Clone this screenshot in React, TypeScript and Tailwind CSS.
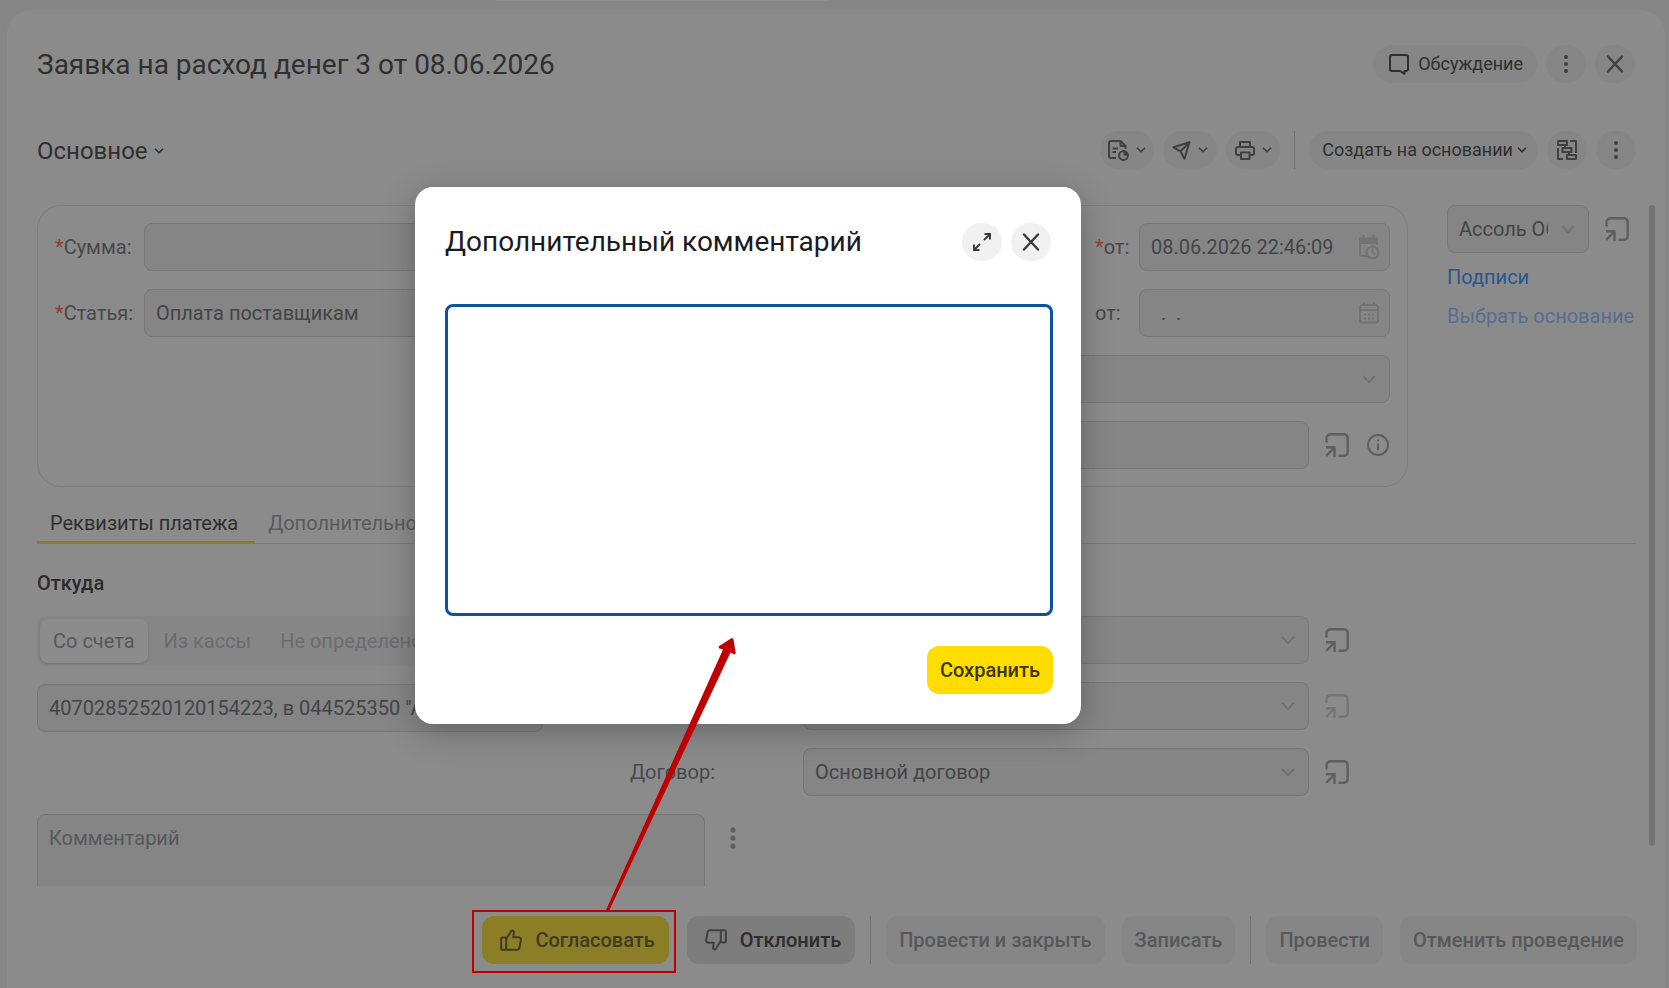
import type { ReactNode } from "react";

const FIELD =
  "h-12 w-full appearance-none rounded-lg border border-[#777777] bg-[#858585] px-[11px] text-xl text-[#444446] outline-none placeholder:text-[#57585a]";

/* ---------- Icons ---------- */

function Svg({ w, h, sw = 2, className = "", children }: { w: number; h: number; sw?: number; className?: string; children: ReactNode }) {
  return (
    <svg
      width={w}
      height={h}
      viewBox={`0 0 ${w} ${h}`}
      fill="none"
      stroke="currentColor"
      strokeWidth={sw}
      strokeLinejoin="round"
      className={`shrink-0 ${className}`}
      aria-hidden="true">
      {children}
    </svg>
  );
}

const Caret = () => (
  <Svg w={10} h={6} sw={1.6}>
    <path d="M1 .8l4 4 4-4" />
  </Svg>
);

const SelectCaret = () => (
  <Svg w={14} h={9} className="pointer-events-none absolute right-[14px] top-5 text-[#727272]">
    <path d="M1.2 1l5.800 6.200L12.800 1" />
  </Svg>
);

const ChatIcon = () => (
  <Svg w={20} h={21}>
    <path d="M11 17H3a2 2 0 01-2-2V3a2 2 0 012-2h14a2 2 0 012 2v12a2 2 0 01-2 2h-1.500v2.800L11 17z" />
  </Svg>
);

const DotsIcon = () => (
  <Svg w={4} h={18} sw={0}>
    <circle cx="2" cy="2" r="2" fill="currentColor" />
    <circle cx="2" cy="9" r="2" fill="currentColor" />
    <circle cx="2" cy="16" r="2" fill="currentColor" />
  </Svg>
);

const DotsLarge = () => (
  <Svg w={6} h={22} sw={0}>
    <circle cx="3" cy="3" r="2.600" fill="currentColor" />
    <circle cx="3" cy="11" r="2.600" fill="currentColor" />
    <circle cx="3" cy="19" r="2.600" fill="currentColor" />
  </Svg>
);

const CloseIcon = () => (
  <Svg w={18} h={18} sw={2.4}>
    <path d="M2 1.500l14 15M16 1.500l-14 15" strokeLinecap="round" />
  </Svg>
);

const ReportIcon = () => (
  <Svg w={21} h={21}>
    <path d="M8 18H3a2 2 0 01-2-2V3a2 2 0 012-2h9.500L17.500 6v3" />
    <path d="M12.500 1v5h5M4.500 8.500h5.500M4.500 12h3.500" />
    <circle cx="15.500" cy="15.500" r="4.400" />
    <path d="M15.500 11.500v4h4a4 4 0 00-4-4z" fill="currentColor" stroke="none" />
  </Svg>
);

const SendIcon = () => (
  <Svg w={19} h={19}>
    <path d="M17.500 1.200L1.500 6.300l7 4 4 7.400zM17.500 1.200L8.500 10.300" />
  </Svg>
);

const PrintIcon = () => (
  <Svg w={20} h={19}>
    <path d="M5 6V1h10v5M5 14H3a2 2 0 01-2-2V8a2 2 0 012-2h14a2 2 0 012 2v4a2 2 0 01-2 2h-2" />
    <path d="M6 11.500h8.500V18H6z" />
  </Svg>
);

const StructureIcon = () => (
  <Svg w={20} h={20}>
    <path d="M1 1h9v4H1zM5.500 8h9v4h-9zM10 15h9v4h-9zM13 1h6v12M1 8v11h5M8 5v3M12 12v3" />
  </Svg>
);

const OpenIcon = ({ dim = false }: { dim?: boolean }) => (
  <button type="button" aria-label="Открыть" className={dim ? "text-[#757575]" : "text-[#5f5f5f]"}>
    <Svg w={24} h={24} sw={2.4}>
      <path d="M1.500 8.500V5a4 4 0 014-3.700H19a3.700 3.700 0 013.700 3.700v14a3.700 3.700 0 01-3.700 3.700h-4.500" strokeLinecap="round" />
      <path d="M1 14.300h8.500V24M9.500 14.300L1.200 23" strokeLinejoin="miter" />
    </Svg>
  </button>
);

const InfoIcon = () => (
  <Svg w={22} h={22}>
    <circle cx="11" cy="11" r="10" />
    <path d="M11 9.500v7M11 5.500v2" />
  </Svg>
);

const CalendarClockIcon = () => (
  <Svg w={21} h={25} className="absolute right-[10px] top-[12px] text-[#737373]">
    <path d="M8 21H3a2 2 0 01-2-2V4h17v6" />
    <path d="M1 3.500h17V8H1z" fill="currentColor" />
    <path d="M4.500 0v4M14.500 0v4" />
    <circle cx="13.500" cy="17.500" r="6" />
    <path d="M13.500 13.500v4.500l2.500 1.500" strokeWidth="1.500" />
  </Svg>
);

const CalendarIcon = () => (
  <Svg w={20} h={22} sw={2} className="absolute right-[11px] top-[13px] text-[#737373]">
    <rect x="1" y="3" width="18" height="17.500" rx="2.500" />
    <path d="M1 8h18M5 0v3M15 0v3" />
    <path d="M5 12.500h10M5 16.500h10" strokeWidth="2" strokeDasharray="2 2" />
  </Svg>
);

const ThumbIcon = ({ down = false }: { down?: boolean }) => (
  <Svg w={22} h={22} className={down ? "rotate-180" : ""}>
    <rect x="1.200" y="8.500" width="5" height="12.300" rx="1.200" />
    <path d="M6.200 10l4.900-7.800c.8-1.400 3-.7 2.800 1.200l-.6 4.900h5.200c1.700 0 2.700 1 2.400 2.500l-1.500 8c-.2 1.200-1 2-2.300 2H6.200" />
  </Svg>
);

const ExpandIcon = () => (
  <Svg w={20} h={20}>
    <path d="M12.500 2H18v5.500M18 2l-6 6M7.500 18H2v-5.500M2 18l6-6" strokeLinejoin="miter" />
  </Svg>
);

/* ---------- Controls ---------- */

function RoundButton({ label, light = false, children }: { label: string; light?: boolean; children: ReactNode }) {
  return (
    <button
      type="button"
      aria-label={label}
      className={`flex h-[38px] w-10 items-center justify-center rounded-full ${
        light ? "bg-[#f1f1f1] text-[#3c3c3c]" : "bg-[#868686] text-[#404040]"
      }`}>
      {children}
    </button>
  );
}

function MenuButton({ label, children }: { label: string; children: ReactNode }) {
  return (
    <button
      type="button"
      aria-label={label}
      className="flex h-[38px] w-[54px] items-center justify-center gap-[7px] rounded-full bg-[#868686] text-[#404040]">
      {children}
      <Caret />
    </button>
  );
}

function Select({ label, id, value = "" }: { label: string; id?: string; value?: string }) {
  return (
    <div className="relative min-w-0 flex-1">
      <select id={id} aria-label={id ? undefined : label} className={`${FIELD} pr-10`}>
        <option>{value}</option>
      </select>
      <SelectCaret />
    </div>
  );
}

function Req() {
  return <span className="text-[#943a38]">*</span>;
}

function FooterButton({ children }: { children: ReactNode }) {
  return (
    <button type="button" className="h-12 rounded-xl bg-[#868686] px-[13px] text-[#57585b]">
      {children}
    </button>
  );
}

/* ---------- Sections ---------- */

function Toolbar() {
  return (
    <div className="mt-12 flex items-center justify-between pl-[30px] pr-[29px]">
      <button type="button" className="flex items-center gap-[6px] pt-[2px] text-2xl text-[#2f2f30]">
        Основное <Caret />
      </button>
      <div className="flex items-center gap-[9px]">
        <MenuButton label="Отчеты">
          <ReportIcon />
        </MenuButton>
        <MenuButton label="Отправить">
          <SendIcon />
        </MenuButton>
        <MenuButton label="Печать">
          <PrintIcon />
        </MenuButton>
        <div className="mx-[5px] h-[38px] w-px bg-[#737373]" />
        <button
          type="button"
          className="flex h-[38px] items-center gap-1 rounded-full bg-[#868686] pl-[13px] pr-[11px] text-lg text-[#2f2f30]">
          Создать на основании <Caret />
        </button>
        <RoundButton label="Структура">
          <StructureIcon />
        </RoundButton>
        <RoundButton label="Еще">
          <DotsIcon />
        </RoundButton>
      </div>
    </div>
  );
}

function MainPanel() {
  return (
    <div className="flex flex-1 gap-10 rounded-3xl border border-[#7e7e7e] p-[17px]">
      <div className="flex flex-1 flex-col gap-[18px]">
        <div className="flex items-center">
          <label htmlFor="sum" className="w-[89px]"><Req />Сумма:</label>
          <input id="sum" className={`${FIELD} flex-1`} />
        </div>
        <div className="flex items-center">
          <label htmlFor="item" className="w-[89px]"><Req />Статья:</label>
          <input id="item" defaultValue="Оплата поставщикам" className={`${FIELD} flex-1`} />
        </div>
      </div>
      <div className="flex w-[590px] flex-col gap-[18px]">
        <div className="flex items-center">
          <input aria-label="Номер" className={`${FIELD} mr-[15px] flex-1`} />
          <label htmlFor="date" className="w-11"><Req />от:</label>
          <div className="relative w-[251px]">
            <input id="date" defaultValue="08.06.2026 22:46:09" className={FIELD} />
            <CalendarClockIcon />
          </div>
        </div>
        <div className="flex items-center">
          <input aria-label="Входящий номер" className={`${FIELD} mr-[15px] flex-1`} />
          <label htmlFor="date-in" className="w-11">от:</label>
          <div className="relative w-[251px]">
            <input id="date-in" defaultValue="  .  ." className={FIELD} />
            <CalendarIcon />
          </div>
        </div>
        <div className="flex">
          <Select label="Подразделение" />
        </div>
        <div className="flex items-center pr-px text-[#5f5f5f]">
          <input aria-label="Проект" className={`${FIELD} mr-4 flex-1`} />
          <OpenIcon />
          <div className="ml-[18px]">
            <InfoIcon />
          </div>
        </div>
      </div>
    </div>
  );
}

function SidePanel() {
  return (
    <div className="w-[189px] text-[#24588f]">
      <div className="flex items-center gap-4 pr-[7px]">
        <Select label="Организация" value="Ассоль ООО" />
        <OpenIcon />
      </div>
      <a href="#sign" className="mt-[9px] block leading-[30px]">Подписи</a>
      <a href="#base" className="mt-[9px] block whitespace-nowrap leading-[30px] text-[#566f8f]">Выбрать основание</a>
    </div>
  );
}

function Payment() {
  return (
    <>
      <div className="mt-[17px] flex border-b border-[#7a7a7a]">
        <button type="button" className="-mb-px h-10 rounded-t-xs border-b-[3px] border-[#8c7d22] pl-[13px] pr-[17px] pt-px text-[#2f2f30]">
          Реквизиты платежа
        </button>
        <button type="button" className="h-[38px] pl-[13px] pr-[17px] text-[#5a5a5d]">Дополнительно</button>
      </div>

      <div className="flex gap-[87px]">
        <div className="w-[506px]">
          <h2 className="mt-6 font-medium leading-[30px] text-[#2b2b2c]">Откуда</h2>
          <div className="mt-[18px] flex h-[50px] w-max rounded-lg bg-[#868686] p-[3px] text-[#6c6c6f]">
            <button type="button" className="rounded-lg bg-[#8c8c8c] px-[13px] text-[#57575a] shadow-sm">Со счета</button>
            <button type="button" className="px-4">Из кассы</button>
            <button type="button" className="pl-[13px] pr-4">Не определено</button>
          </div>
          <div className="mt-[18px] flex">
            <Select label="Счет" value={'40702852520120154223, в 044525350 "АЛЬФА"'} />
          </div>
        </div>
        <div className="mt-[72px] flex w-[719px] flex-col gap-[18px]">
          <div className="flex items-center gap-4 pl-[173px]">
            <Select label="Получатель" />
            <OpenIcon />
          </div>
          <div className="flex items-center gap-4 pl-[173px]">
            <Select label="Счет получателя" />
            <OpenIcon dim />
          </div>
          <div className="flex items-center gap-4">
            <label htmlFor="contract" className="w-[157px]">Договор:</label>
            <Select id="contract" label="Договор" value="Основной договор" />
            <OpenIcon />
          </div>
        </div>
      </div>

      <div className="mt-[18px] flex gap-[25px] text-[#5f5f5f]">
        <textarea aria-label="Комментарий" placeholder="Комментарий" className={`${FIELD} h-[110px] max-w-[668px] resize-none py-[9px]`} />
        <button type="button" aria-label="Еще" className="h-12">
          <DotsLarge />
        </button>
      </div>
    </>
  );
}

function Footer() {
  return (
    <footer className="mt-[30px] flex justify-end pb-6 pr-[28px] text-xl font-medium">
      <div className="relative">
        <button type="button" className="flex h-12 items-center gap-[13px] rounded-xl bg-[#8c7e27] pl-[18px] pr-[14px] text-[#403b22]">
          <ThumbIcon />
          Согласовать
        </button>
        <div className="pointer-events-none absolute -bottom-[9px] -left-[10px] -right-[7px] -top-[6px] border-2 border-[#bf0000]" />
      </div>
      <button type="button" className="ml-[18px] flex h-12 items-center gap-[13px] rounded-xl bg-[#7d7d7d] pl-[18px] pr-[14px] text-[#2d2d2d]">
        <span className="text-[#404040]">
          <ThumbIcon down />
        </span>
        Отклонить
      </button>
      <div className="mx-[15px] w-px bg-[#737373]" />
      <div className="flex gap-[17px]">
        <FooterButton>Провести и закрыть</FooterButton>
        <FooterButton>Записать</FooterButton>
      </div>
      <div className="mx-[15px] w-px bg-[#737373]" />
      <div className="flex gap-[17px]">
        <FooterButton>Провести</FooterButton>
        <FooterButton>Отменить проведение</FooterButton>
      </div>
    </footer>
  );
}

function CommentDialog() {
  return (
    <div
      role="dialog"
      aria-labelledby="dialog-title"
      className="absolute left-[415px] top-[187px] w-[666px] rounded-[18px] bg-white pb-[30px] pl-[30px] pr-7 pt-[35px] shadow-[0_8px_32px_rgba(0,0,0,0.25)]">
      <div className="flex items-center gap-[9px] pr-[2px]">
        <h2 id="dialog-title" className="flex-1 text-[28px] leading-[40px] text-[#1b1b1d]">Дополнительный комментарий</h2>
        <RoundButton label="Развернуть" light>
          <ExpandIcon />
        </RoundButton>
        <RoundButton label="Закрыть" light>
          <CloseIcon />
        </RoundButton>
      </div>
      <textarea
        aria-labelledby="dialog-title"
        className="mt-[42px] block h-[312px] w-full resize-none rounded-lg border-3 border-[#0b52a0] p-3 text-xl outline-none"
      />
      <div className="mt-[30px] flex justify-end">
        <button type="button" className="h-12 rounded-xl bg-[#ffdd00] px-[13px] text-xl font-medium text-[#403700]">
          Сохранить
        </button>
      </div>
    </div>
  );
}

export default function App() {
  return (
    <div className="relative flex h-screen flex-col overflow-hidden bg-[#868686] font-['Roboto',sans-serif] text-xl text-[#48484a]">
      <div className="ml-[497px] h-px w-[330px] bg-[#8e8e8e]" />

      <main className="ml-[7px] mr-1 mt-[9px] flex min-h-0 flex-1 flex-col rounded-t-3xl bg-[#8b8b8b] pt-[35px]">
        <header className="flex items-start justify-between pl-[30px] pr-[30px]">
          <h1 className="-mb-[2px] text-[28px] leading-[40px] text-[#2f2f30]">Заявка на расход денег 3 от 08.06.2026</h1>
          <div className="flex gap-[9px]">
            <button type="button" className="flex h-[38px] items-center gap-[9px] rounded-full bg-[#868686] pl-4 pr-[14px] text-lg text-[#2f2f30]">
              <ChatIcon />
              Обсуждение
            </button>
            <RoundButton label="Еще">
              <DotsIcon />
            </RoundButton>
            <RoundButton label="Закрыть">
              <CloseIcon />
            </RoundButton>
          </div>
        </header>

        <Toolbar />

        <div className="mt-9 flex min-h-0 flex-1 gap-[13px] overflow-hidden pl-[30px] pr-[10px]">
          <div className="min-w-0 flex-1">
            <div className="flex gap-[39px]">
              <MainPanel />
              <SidePanel />
            </div>
            <Payment />
          </div>
          {/* Scroll thumb */}
          <div className="mb-10 w-[6px] rounded-full bg-[#737373]" />
        </div>

        <Footer />
      </main>

      <CommentDialog />

      {/* Pointer from the approve button to the comment dialog */}
      <svg className="pointer-events-none absolute left-[600px] top-[630px]" width="145" height="282" viewBox="0 0 145 282" aria-hidden="true">
        <path
          d="M6 280L123 19.500l-3.500-1a1.500 1.500 0 01-.3-2.500L131 8.500a1.500 1.500 0 012.500 1L135.700 23a1.300 1.300 0 01-2.200 1L130.500 22.500 9 281z"
          fill="#bf0000"
        />
      </svg>
    </div>
  );
}
